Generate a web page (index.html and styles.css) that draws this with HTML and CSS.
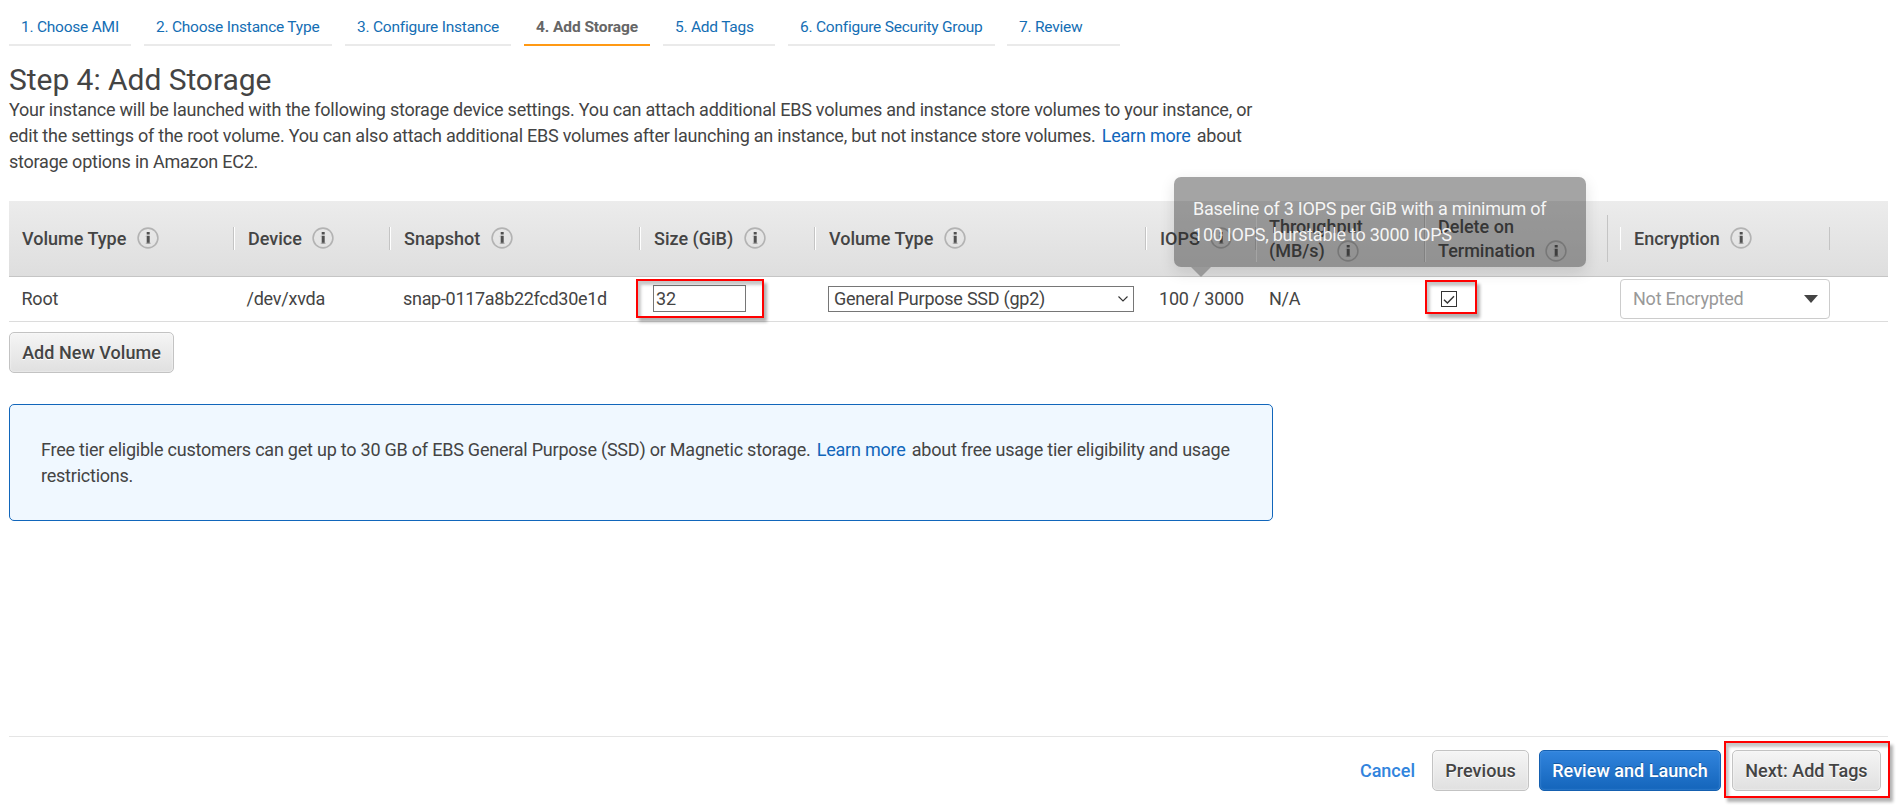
FILE: index.html
```html
<!DOCTYPE html>
<html lang="en">
<head>
<meta charset="utf-8">
<title>Add Storage</title>
<link rel="stylesheet" href="styles.css">
</head>
<body>
<svg class="defs" width="0" height="0" aria-hidden="true">
  <symbol id="info" viewBox="0 0 22 22">
    <circle cx="11" cy="11" r="9.900" fill="none" stroke="#b3b3b3" stroke-width="1.600"/>
    <path d="M9.700 5h3v2.500h-3zM9.700 8.700h3v8h-3z" fill="#505050"/>
    <path d="M8.700 8.700h1v1h-1zM8.700 15.700h5v1h-5z" fill="#aaa"/>
  </symbol>
</svg>
<div class="page">
  <nav class="steps">
    <a class="step s1">1. Choose AMI</a>
    <a class="step s2">2. Choose Instance Type</a>
    <a class="step s3">3. Configure Instance</a>
    <a class="step s4 current">4. Add Storage</a>
    <a class="step s5">5. Add Tags</a>
    <a class="step s6">6. Configure Security Group</a>
    <a class="step s7">7. Review</a>
  </nav>
  <main class="content">
    <h1 class="title">Step 4: Add Storage</h1>
    <p class="intro">Your instance will be launched with the following storage device settings. You can attach additional EBS volumes and instance store volumes to your instance, or<br>edit the settings of the root volume. You can also attach additional EBS volumes after launching an instance, but not instance store volumes. <a class="link">Learn more</a> about<br>storage options in Amazon EC2.</p>

    <div class="table">
      <div class="row head">
        <div class="th first"><span>Volume Type</span><svg class="info"><use href="#info"/></svg></div>
        <div class="th"><span>Device</span><svg class="info"><use href="#info"/></svg></div>
        <div class="th"><span>Snapshot</span><svg class="info"><use href="#info"/></svg></div>
        <div class="th"><span>Size (GiB)</span><svg class="info"><use href="#info"/></svg></div>
        <div class="th"><span>Volume Type</span><svg class="info"><use href="#info"/></svg></div>
        <div class="th"><span>IOPS</span><svg class="info"><use href="#info"/></svg></div>
        <div class="th tall"><span>Throughput<br>(MB/s)</span><svg class="info thr"><use href="#info"/></svg></div>
        <div class="th tall"><span>Delete on<br>Termination</span><svg class="info"><use href="#info"/></svg></div>
        <div class="th enc"><span>Encryption</span><svg class="info"><use href="#info"/></svg></div>
      </div>
      <div class="row data">
        <div class="td root">Root</div>
        <div class="td dev">/dev/xvda</div>
        <div class="td snap">snap-0117a8b22fcd30e1d</div>
        <div class="td size"><span class="input">32</span><i class="mark mark-size"></i></div>
        <div class="td"><span class="select"><span>General Purpose SSD (gp2)</span><svg width="10" height="6" viewBox="0 0 10 6"><path d="M.5.5 5 5 9.500.5" fill="none" stroke="#333" stroke-width="1.1"/></svg></span></div>
        <div class="td iops">100 / 3000
          <div class="tooltip">Baseline of 3 IOPS per GiB with a minimum of<br>100 IOPS, burstable to 3000 IOPS</div>
        </div>
        <div class="td">N/A</div>
        <div class="td del"><span class="check"><svg width="14" height="14" viewBox="0 0 14 14"><path d="M2 7.700 5.400 11.100 12 4.200" fill="none" stroke="#333" stroke-width="1.400"/></svg></span><i class="mark mark-check"></i></div>
        <div class="td enc"><span class="combo"><span>Not Encrypted</span><svg width="14" height="8" viewBox="0 0 14 8"><path d="M0 0h14L7 8z" fill="#444"/></svg></span></div>
      </div>
    </div>

    <button class="btn add">Add New Volume</button>

    <div class="notice">Free tier eligible customers can get up to 30 GB of EBS General Purpose (SSD) or Magnetic storage. <a class="link">Learn more</a> about free usage tier eligibility and usage<br>restrictions.</div>
  </main>
  <footer class="footer">
    <a class="cancel">Cancel</a>
    <button class="btn prev">Previous</button>
    <button class="btn primary">Review and Launch</button>
    <div class="next-wrap"><button class="btn next">Next: Add Tags</button><i class="mark mark-next"></i></div>
  </footer>
</div>
</body>
</html>
```

FILE: styles.css
```css
* { box-sizing: border-box; }
body {
  margin: 0;
  background: #fff;
  color: #444;
  font: 18px/26px Roboto, "Liberation Sans", sans-serif;
  letter-spacing: -.24px;
  overflow: hidden;
}
.defs { position: absolute; }
.page {
  height: 805px;
  padding: 0 10px 0 9px;
  display: flex;
  flex-direction: column;
}
.steps { display: flex; gap: 13px; height: 46px; flex: none; }
.step {
  padding: 14px 0 0 12px;
  height: 46px;
  border-bottom: 2px solid #eaeaea;
  font-size: 15.500px;
  letter-spacing: -.23px;
  color: #146eb4;
  white-space: nowrap;
}
.s1 { width: 122px; }
.s2 { width: 188px; }
.s3 { width: 166px; }
.s4 { width: 126px; }
.s5 { width: 112px; }
.s6 { width: 207px; }
.s7 { width: 113px; margin-left: -1px; }
.step.current { color: #666; font-weight: 700; border-color: #ff9914; letter-spacing: -.08px; }
.content { flex: 1; }
.title { margin: 16px 0 0; font-size: 30px; line-height: 36px; font-weight: 400; height: 35px; letter-spacing: -.05px; }
.intro { margin: 0; padding: 0; height: 104px; white-space: nowrap; letter-spacing: -.228px; }
.link { color: #1166bb; margin: 0 2px; }
.row {
  display: grid;
  grid-template-columns: 225px 156px 250px 175px 331px 110px 169px 183px 222px 1fr;
}
.head {
  height: 76px;
  align-items: center;
  background: linear-gradient(#ececec, #dedede);
  border-bottom: 1px solid #c5c5c5;
  font-weight: 500;
  letter-spacing: 0;
  line-height: 24px;
}
.th {
  display: flex;
  align-items: center;
  height: 23px;
  padding-left: 13px;
  border-left: 1px solid #fff;
  border-right: 1px solid #c4c4c4;
  white-space: nowrap;
}
.th.first { border-left-color: transparent; padding-left: 12px; }
.th.tall { height: 47px; align-items: flex-end; padding-left: 12px; }
.th.tall span { margin-bottom: -1px; }
.th.enc { margin-left: 12px; padding-left: 13px; }
.info { width: 22px; height: 22px; margin: -1px 0 0 10.500px; flex: none; }
.thr { margin-left: -26px; }
.data { height: 45px; align-items: center; border-bottom: 1px solid #dcdcdc; }
.td {
  position: relative;
  display: flex;
  align-items: center;
  height: 44px;
  padding-left: 13px;
  white-space: nowrap;
}
.td.root, .td.dev { padding-left: 12.500px; }
.td.snap { letter-spacing: -.3px; }
.td.enc { margin-left: 12px; padding-left: 0; }
.input {
  width: 93px;
  height: 27px;
  margin-top: -1px;
  border: 1px solid #767676;
  padding-left: 2px;
  line-height: 25px;
}
.select {
  display: flex;
  align-items: center;
  justify-content: space-between;
  width: 306px;
  height: 26px;
  padding: 0 5px;
  border: 1px solid #767676;
}
.check { display: flex; width: 16px; height: 16px; margin-left: 3px; border: 1px solid #333; }
.combo {
  display: flex;
  align-items: center;
  justify-content: space-between;
  width: 210px;
  height: 40px;
  padding: 0 11px 0 12px;
  border: 1px solid #ccc;
  border-radius: 4px;
  color: #999;
}
.mark { position: absolute; border: 2px solid #f00; box-shadow: 3px 4px 3px rgba(0,0,0,.3), inset 3px 4px 3px rgba(0,0,0,.22); }
.mark-size { left: -4px; top: 2px; width: 128px; height: 39px; }
.mark-check { left: 0; top: 3px; width: 52px; height: 34px; }
.mark-next { left: -8px; top: -9px; width: 166px; height: 57px; }
.tooltip {
  position: absolute;
  left: 28px;
  top: -100px;
  width: 412px;
  height: 90px;
  padding: 19px;
  border-radius: 7px;
  background: rgba(34,34,34,.41);
  box-shadow: 0 5px 15px rgba(0,0,0,.12);
  color: rgba(255,255,255,.92);
}
.tooltip::after {
  content: "";
  position: absolute;
  left: 17px;
  top: 90px;
  border: 10px solid transparent;
  border-top-color: #999;
  border-bottom: 0;
}
.btn {
  display: block;
  height: 41px;
  padding: 0;
  border: 1px solid #c3c3c3;
  border-radius: 5px;
  background: linear-gradient(#f5f5f5, #e0e0e0);
  box-shadow: inset 0 0 2px #fff;
  color: #444;
  font: 500 18px/26px Roboto, "Liberation Sans", sans-serif;
  letter-spacing: .03px;
  text-shadow: 0 1px 0 #fff;
  white-space: nowrap;
}
.add { width: 165px; margin-top: 10px; }
.notice {
  width: 1264px;
  height: 117px;
  margin-top: 31px;
  padding: 32px 31px;
  border: 1px solid #1166bb;
  border-radius: 5px;
  background: #f0f8ff;
  letter-spacing: -.225px;
  white-space: nowrap;
}
.footer {
  flex: none;
  display: flex;
  justify-content: flex-end;
  height: 69px;
  padding: 13px 7px 0 0;
  border-top: 1px solid #e5e5e5;
}
.cancel { margin: 8px 17px 0 0; color: #3184dd; font-weight: 500; letter-spacing: 0; }
.prev { width: 97px; }
.primary {
  width: 182px;
  margin: 0 11px 0 10px;
  border-color: #1560b0;
  background: linear-gradient(#3184dd, #1465bb);
  box-shadow: inset 0 0 2px #5a9de2;
  color: #fff;
  text-shadow: 0 -1px 0 #1458a0;
}
.next-wrap { position: relative; }
.next { width: 149px; }
```
